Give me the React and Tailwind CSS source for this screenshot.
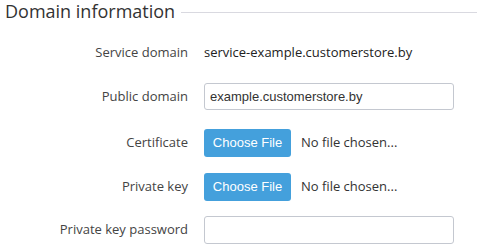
export default function App() {
    const labelCls = 'w-[188px] shrink-0 text-right text-[13px] text-[#444]';

    return (
        <div className="w-[477px] h-[250px] bg-white overflow-hidden font-['Open_Sans',sans-serif]">
            {/* Section heading */}
            <div className="flex items-center h-[23px] pl-[5px]">
                <h2 className="text-[18px] leading-[23px] text-[#333] whitespace-nowrap">Domain information</h2>
                <div className="flex-1 ml-[6px] mt-[1px] h-px bg-[#d9d9e0]"></div>
            </div>

            <div className="flex flex-col pt-[19px]">
                <div className="flex items-center h-[22px]">
                    <label className={labelCls}>Service domain</label>
                    <span className="ml-[16px] text-[13px] text-[#222]">service-example.customerstore.by</span>
                </div>

                <div className="flex items-center h-[27px] mt-[19px]">
                    <label className={labelCls}>Public domain</label>
                    <input
                        type="text"
                        defaultValue="example.customerstore.by"
                        className="ml-[16px] w-[250px] h-[27px] px-[5px] border border-[#c4c8d0] rounded-[3px] text-[13px] text-[#333] font-['Liberation_Sans',sans-serif] outline-none"
                    />
                </div>

                <div className="flex items-center h-[28px] mt-[19px]">
                    <label className={labelCls}>Certificate</label>
                    <button className="ml-[16px] w-[87px] h-[28px] rounded-[3px] bg-[#44a0dc] text-white text-[13px] font-['Liberation_Sans',sans-serif]">
                        Choose File
                    </button>
                    <span className="ml-[10px] text-[13px] text-[#333]">No file chosen...</span>
                </div>

                <div className="flex items-center h-[28px] mt-[16px]">
                    <label className={labelCls}>Private key</label>
                    <button className="ml-[16px] w-[87px] h-[28px] rounded-[3px] bg-[#44a0dc] text-white text-[13px] font-['Liberation_Sans',sans-serif]">
                        Choose File
                    </button>
                    <span className="ml-[10px] text-[13px] text-[#333]">No file chosen...</span>
                </div>

                <div className="flex items-center h-[28px] mt-[15px]">
                    <label className={labelCls}>Private key password</label>
                    <input
                        type="password"
                        className="ml-[16px] w-[250px] h-[28px] px-[6px] border border-[#c4c8d0] rounded-[3px] text-[13px] outline-none"
                    />
                </div>
            </div>
        </div>
    );
}
